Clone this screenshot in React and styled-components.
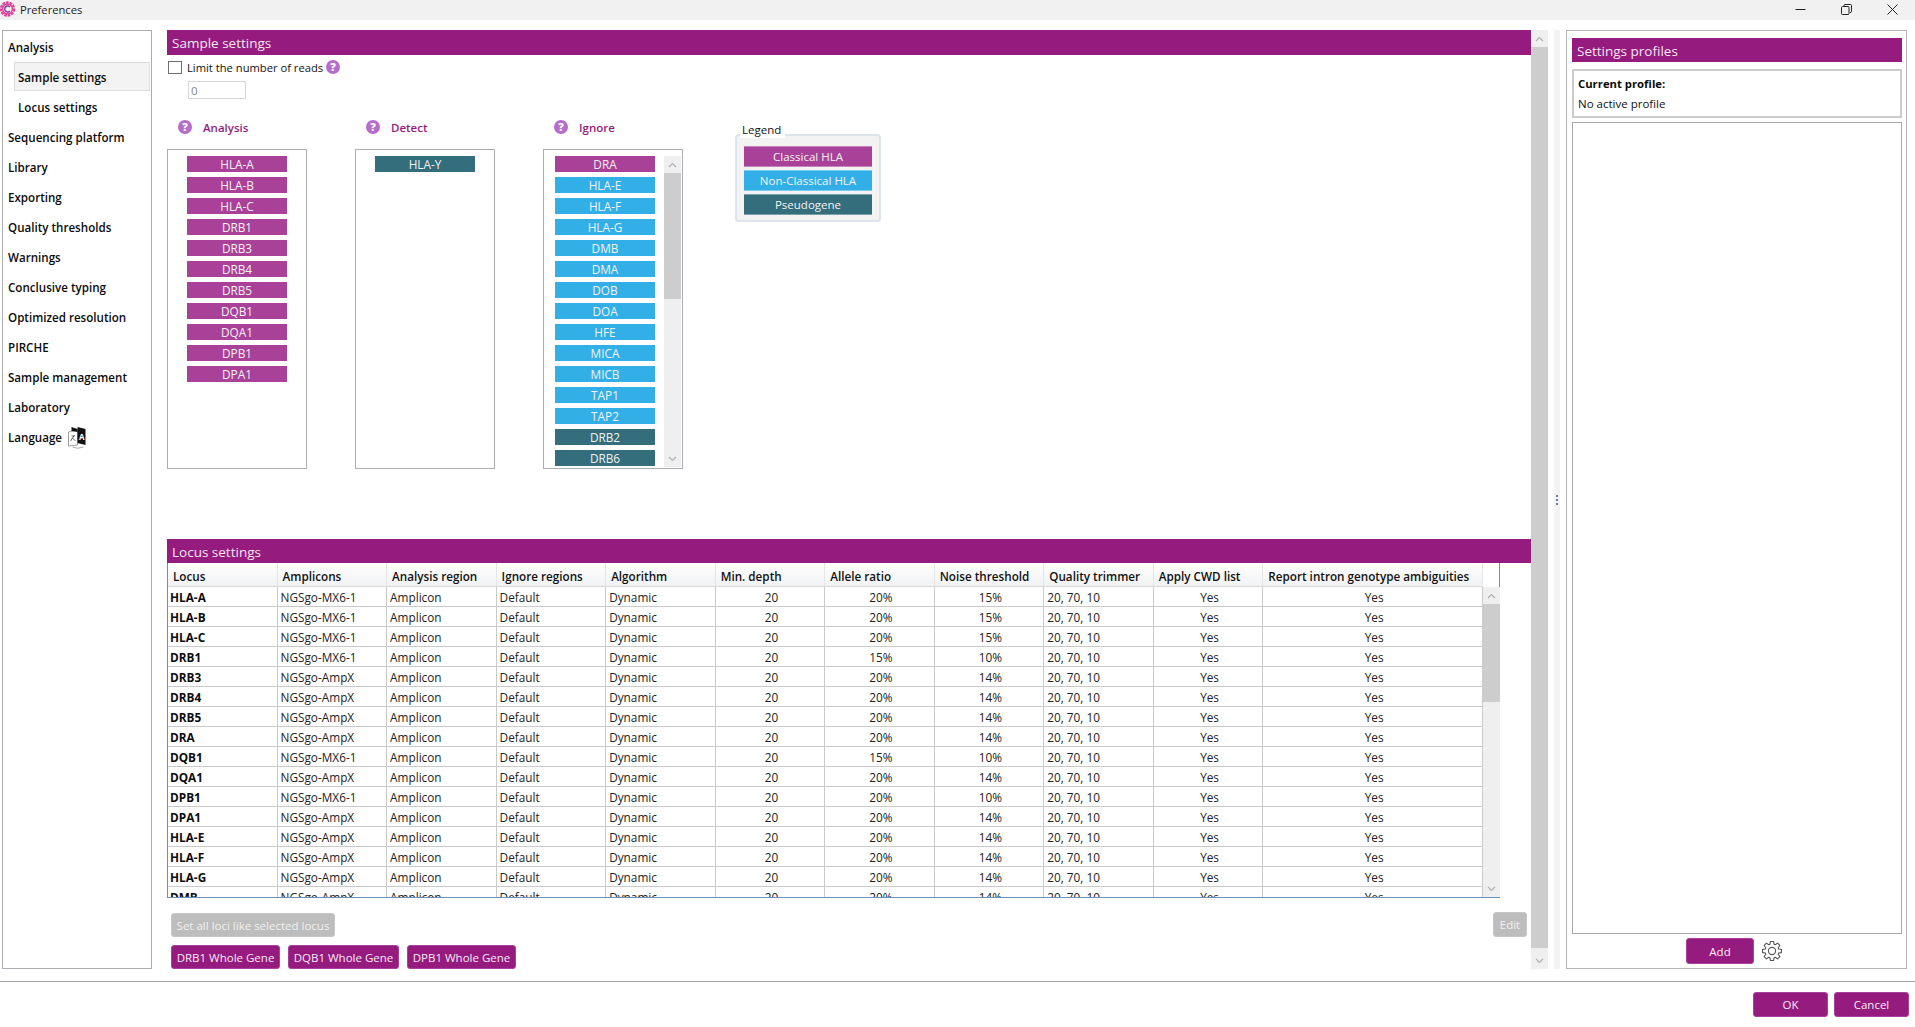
import React from "react";
import styled, { createGlobalStyle } from "styled-components";

const PURPLE = "#951b7e";
const UI_FONT = `"Open Sans", "Noto Sans", "Liberation Sans", sans-serif`;

const GlobalStyle = createGlobalStyle`
  html, body {
    margin: 0;
    padding: 0;
    background: #fff;
  }
  body {
    font-family: ${UI_FONT};
    font-size: 11.5px;
    color: #111;
    overflow: hidden;
  }
`;

const Window = styled.div`
  width: 1915px;
  height: 1027px;
  display: flex;
  flex-direction: column;
  background: #fff;
  overflow: hidden;
`;

const TitleBar = styled.div`
  height: 20px;
  flex: none;
  box-sizing: border-box;
  padding-bottom: 2px;
  display: flex;
  align-items: center;
  background: #f1f1f1;
`;

const AppIcon = styled.svg`
  width: 16px;
  height: 16px;
  flex: none;
`;

const WindowTitle = styled.span`
  margin-left: 4px;
  flex: 1;
  font-size: 11.2px;
  color: #222;
`;

const WinButton = styled.div`
  width: 46px;
  height: 18px;
  display: flex;
  align-items: center;
  justify-content: center;
  color: #222;
`;

const Body = styled.div`
  flex: 1;
  min-height: 0;
  display: flex;
  padding: 10px 8px 12px 2px;
  border-bottom: 1px solid #a3a3a3;
`;

const Nav = styled.nav`
  width: 150px;
  flex: none;
  box-sizing: border-box;
  margin-right: 15px;
  padding: 1px 1px;
  border: 1px solid #abadb3;
  display: flex;
  flex-direction: column;
`;

const NavItem = styled.div`
  height: ${(p) => (p.$sub ? "29px" : "30px")};
  margin-left: ${(p) => (p.$sub ? "10px" : "0")};
  padding: ${(p) => (p.$sub ? "1px" : "0")} 0 0 3px;
  margin-bottom: ${(p) => (p.$sub ? "1px" : "0")};
  box-sizing: border-box;
  display: flex;
  align-items: center;
  gap: 5px;
  font-weight: 600;
  font-size: 11.6px;
  color: #0c0c0c;
  background: ${(p) => (p.$active ? "#f3f3f3" : "transparent")};
  border: 1px solid ${(p) => (p.$active ? "#dcdcdc" : "transparent")};
`;

const Main = styled.main`
  width: 1364px;
  flex: none;
  display: flex;
  flex-direction: column;
`;

const SectionHeader = styled.div`
  height: ${(p) => p.$height || 25}px;
  flex: none;
  box-sizing: border-box;
  padding: ${(p) => p.$nudge || 0}px 0 0 5px;
  display: flex;
  align-items: center;
  background: ${PURPLE};
  color: #f4e6f2;
  font-size: 13.5px;
`;

const SampleArea = styled.section`
  height: 484px;
  flex: none;
  box-sizing: border-box;
  padding-top: 5px;
`;

const CheckRow = styled.div`
  display: flex;
  align-items: center;
  height: 14px;
  padding-left: 1px;
  font-size: 11.2px;
`;

const CheckBox = styled.span`
  width: 14px;
  height: 13px;
  box-sizing: border-box;
  border: 1px solid #6e6e6e;
  background: #fff;
  margin-right: 5px;
`;

const HelpIcon = styled.span`
  width: 14px;
  height: 14px;
  flex: none;
  border-radius: 50%;
  background: #b56ccb;
  color: #fff;
  font-size: 11px;
  font-weight: 800;
  line-height: 14px;
  text-align: center;
  margin-left: ${(p) => p.$gap || 0}px;
`;

const ReadsInput = styled.input`
  display: block;
  width: 58px;
  height: 18px;
  margin: 7px 0 0 21px;
  box-sizing: border-box;
  padding: 0 2px;
  border: 1px solid #d6d6d6;
  font: inherit;
  color: #888;
  outline: none;
`;

const ListsRow = styled.div`
  display: flex;
  margin-top: 18px;
`;

const ListColumn = styled.div`
  width: 140px;
  flex: none;
  margin-right: 48px;
  display: flex;
  flex-direction: column;
`;

const ListHeading = styled.div`
  height: 20px;
  display: flex;
  align-items: center;
  padding-left: 11px;
  margin-bottom: 12px;
  color: ${PURPLE};
  font-weight: 600;
  gap: 11px;
`;

const ListBox = styled.div`
  height: 320px;
  box-sizing: border-box;
  border: 1px solid #abadb3;
  padding: 6px ${(p) => (p.$scroll ? "1px" : "19px")} 1px ${(p) => (p.$scroll ? "11px" : "19px")};
  display: flex;
  gap: 9px;
  overflow: hidden;
`;

const Chips = styled.div`
  display: flex;
  flex-direction: column;
  width: 100px;
  flex: none;
  gap: 5px;
  overflow: hidden;
`;

const colors = {
  classical: "#a94198",
  nonClassical: "#32afe6",
  pseudo: "#346e7c",
};

const Chip = styled.div`
  height: 16px;
  flex: none;
  line-height: 16px;
  text-align: center;
  color: #f2f2f2;
  font-size: 11.8px;
  background: ${(p) => colors[p.$kind]};
`;

const ScrollTrack = styled.div`
  width: 17px;
  flex: none;
  display: flex;
  flex-direction: column;
  background: #efefef;
`;

const ScrollArrow = styled.div`
  height: 17px;
  flex: none;
  display: flex;
  align-items: center;
  justify-content: center;
  color: #b0b0b0;
`;

const ScrollThumb = styled.div`
  height: ${(p) => p.$height}px;
  flex: none;
  background: #cdcdcd;
`;

const ScrollGap = styled.div`
  flex: 1;
`;

const LegendBox = styled.div`
  position: relative;
  width: 146px;
  height: 88px;
  flex: none;
  box-sizing: border-box;
  margin: 17px 0 0 4px;
  padding: 10px 7px;
  border: 2px solid #dde4ec;
  border-radius: 4px;
  background: #f3f3f3;
  display: flex;
  flex-direction: column;
  gap: 3px;
`;

const LegendTitle = styled.span`
  position: absolute;
  top: -14px;
  left: 3px;
  padding: 0 4px 0 2px;
  background: #fff;
  color: #111;
  line-height: 16px;
`;

const LegendChip = styled.div`
  height: 21px;
  flex: none;
  box-sizing: border-box;
  line-height: 19px;
  text-align: center;
  color: #f2f2f2;
  background: ${(p) => colors[p.$kind]};
  border-top: 1px solid rgba(255, 255, 255, 0.35);
  border-bottom: 1px solid rgba(255, 255, 255, 0.35);
`;

const TableFrame = styled.div`
  height: 335px;
  width: 1333px;
  flex: none;
  box-sizing: border-box;
  display: flex;
  border: 1px solid #6d8fb5;
  border-top: none;
`;

const TableClip = styled.div`
  width: 1315px;
  flex: none;
  overflow: hidden;
`;

const Table = styled.table`
  width: 1315px;
  table-layout: fixed;
  border-collapse: separate;
  border-spacing: 0;
  font-size: 11.8px;
`;

const HeadCell = styled.th`
  height: 24px;
  box-sizing: border-box;
  padding: 3px 0 0 5px;
  text-align: left;
  font-size: 11.7px;
  font-weight: 600;
  color: #111;
  white-space: nowrap;
  background: linear-gradient(#fff, #f1f2f4);
  border-right: 1px solid #e6e6e6;
  border-bottom: 1px solid #d8d8d8;
`;

const Cell = styled.td`
  height: 20px;
  box-sizing: border-box;
  padding: 0 0 0 ${(p) => (p.$strong ? 2 : 3)}px;
  text-align: ${(p) => (p.$center ? "center" : "left")};
  font-weight: ${(p) => (p.$strong ? 700 : 400)};
  color: ${(p) => (p.$strong ? "#0c0c0c" : "#222")};
  white-space: nowrap;
  border-right: 1px solid #cacaca;
  border-bottom: 1px solid #cacaca;
`;

const Actions = styled.div`
  display: flex;
  justify-content: space-between;
  align-items: flex-start;
  margin-top: 15px;
  padding: 0 4px;
`;

const ActionColumn = styled.div`
  display: flex;
  flex-direction: column;
  align-items: flex-start;
  gap: 8px;
`;

const ButtonRow = styled.div`
  display: flex;
  gap: 8px;
`;

const Button = styled.button`
  height: ${(p) => p.$height || 24}px;
  width: ${(p) => p.$width}px;
  box-sizing: border-box;
  padding: 0;
  border: 1px solid ${(p) => (p.disabled ? "#c6c6c6" : "#a9409a")};
  border-radius: 3px;
  background: ${(p) => (p.disabled ? "#bdbdbd" : PURPLE)};
  color: ${(p) => (p.disabled ? "#f0f0f0" : "#f7ecf5")};
  font-family: ${UI_FONT};
  font-size: 11.5px;
`;

const EditButton = styled(Button)`
  margin-top: -1px;
`;

const Splitter = styled.div`
  width: 6px;
  flex: none;
  margin: 0 6px;
  background: #f3f3f3;
  display: flex;
  flex-direction: column;
  align-items: center;
  justify-content: center;
  gap: 2px;
`;

const SplitterDot = styled.span`
  width: 2px;
  height: 2px;
  background: #6d7f95;
`;

const Side = styled.aside`
  width: 341px;
  flex: none;
  box-sizing: border-box;
  padding: 7px 4px 4px 5px;
  border: 1px solid #b5b5b5;
  display: flex;
  flex-direction: column;
`;

const ProfileBox = styled.div`
  height: 49px;
  flex: none;
  box-sizing: border-box;
  margin-top: 7px;
  padding: 4px 4px;
  border: 2px solid #cccccc;
  display: flex;
  flex-direction: column;
  gap: 3px;
  line-height: 17px;
`;

const ProfileLabel = styled.span`
  font-size: 11.3px;
  font-weight: 700;
  color: #0c0c0c;
`;

const ProfileList = styled.div`
  flex: 1;
  min-height: 0;
  margin-top: 4px;
  border: 1px solid #aaaaaa;
`;

const SideFooter = styled.div`
  flex: none;
  display: flex;
  align-items: center;
  justify-content: center;
  gap: 8px;
  padding-top: 4px;
  padding-right: 6px;
`;

const Footer = styled.footer`
  height: 45px;
  flex: none;
  box-sizing: border-box;
  display: flex;
  justify-content: flex-end;
  gap: 6px;
  padding: 10px 6px 0 0;
`;

const navItems = [
  { label: "Analysis" },
  { label: "Sample settings", sub: true, active: true },
  { label: "Locus settings", sub: true },
  { label: "Sequencing platform" },
  { label: "Library" },
  { label: "Exporting" },
  { label: "Quality thresholds" },
  { label: "Warnings" },
  { label: "Conclusive typing" },
  { label: "Optimized resolution" },
  { label: "PIRCHE" },
  { label: "Sample management" },
  { label: "Laboratory" },
  { label: "Language", language: true },
];

const analysisLoci = ["HLA-A", "HLA-B", "HLA-C", "DRB1", "DRB3", "DRB4", "DRB5", "DQB1", "DQA1", "DPB1", "DPA1"];
const ignoreLoci = [
  ["DRA", "classical"],
  ["HLA-E", "nonClassical"],
  ["HLA-F", "nonClassical"],
  ["HLA-G", "nonClassical"],
  ["DMB", "nonClassical"],
  ["DMA", "nonClassical"],
  ["DOB", "nonClassical"],
  ["DOA", "nonClassical"],
  ["HFE", "nonClassical"],
  ["MICA", "nonClassical"],
  ["MICB", "nonClassical"],
  ["TAP1", "nonClassical"],
  ["TAP2", "nonClassical"],
  ["DRB2", "pseudo"],
  ["DRB6", "pseudo"],
];

const columns = [
  "Locus",
  "Amplicons",
  "Analysis region",
  "Ignore regions",
  "Algorithm",
  "Min. depth",
  "Allele ratio",
  "Noise threshold",
  "Quality trimmer",
  "Apply CWD list",
  "Report intron genotype ambiguities",
];

const MX = "NGSgo-MX6-1";
const AMP = "NGSgo-AmpX";
const rows = [
  ["HLA-A", MX, "20%", "15%"],
  ["HLA-B", MX, "20%", "15%"],
  ["HLA-C", MX, "20%", "15%"],
  ["DRB1", MX, "15%", "10%"],
  ["DRB3", AMP, "20%", "14%"],
  ["DRB4", AMP, "20%", "14%"],
  ["DRB5", AMP, "20%", "14%"],
  ["DRA", AMP, "20%", "14%"],
  ["DQB1", MX, "15%", "10%"],
  ["DQA1", AMP, "20%", "14%"],
  ["DPB1", MX, "20%", "10%"],
  ["DPA1", AMP, "20%", "14%"],
  ["HLA-E", AMP, "20%", "14%"],
  ["HLA-F", AMP, "20%", "14%"],
  ["HLA-G", AMP, "20%", "14%"],
  ["DMB", AMP, "20%", "14%"],
];

const Chevron = ({ down }) => (
  <svg width="9" height="6" viewBox="0 0 9 6" fill="none" stroke="currentColor" strokeWidth="1.2">
    <polyline points={down ? "1,1 4.5,4.5 8,1" : "1,5 4.5,1.5 8,5"} />
  </svg>
);

const Scrollbar = ({ thumb, className }) => (
  <ScrollTrack className={className}>
    <ScrollArrow>
      <Chevron />
    </ScrollArrow>
    <ScrollThumb $height={thumb} />
    <ScrollGap />
    <ScrollArrow>
      <Chevron down />
    </ScrollArrow>
  </ScrollTrack>
);

const TableScroll = styled(Scrollbar)`
  margin-top: 24px;
`;

// 8 teeth, each tooth is 4 points on an outer and an inner radius
const gearPath = (() => {
  const pts = [];
  for (let i = 0; i < 8; i++) {
    const a = (i * Math.PI) / 4;
    [[-0.3, 7], [-0.17, 9.6], [0.17, 9.6], [0.3, 7]].forEach(([da, r]) => {
      pts.push(`${(10 + r * Math.cos(a + da)).toFixed(2)},${(10 + r * Math.sin(a + da)).toFixed(2)}`);
    });
  }
  return `M${pts.join(" L")} Z`;
})();

const GearIcon = () => (
  <svg width="20" height="20" viewBox="0 0 20 20" fill="none" stroke="#555" strokeWidth="1.1" strokeLinejoin="round">
    <path d={gearPath} />
    <circle cx="10" cy="10" r="3.6" />
  </svg>
);

const LogoIcon = () => (
  <AppIcon viewBox="0 0 16 16">
    <circle cx="7.5" cy="8" r="6.4" fill="none" stroke="#e0409a" strokeWidth="2.6" strokeDasharray="2.6 0.9" />
    <circle cx="7.5" cy="8" r="4.8" fill="none" stroke="#e0409a" strokeWidth="1.4" />
    <path d="M10 6 A3 3 0 1 0 10 10" fill="none" stroke="#8e3c9e" strokeWidth="1.5" />
  </AppIcon>
);

const LanguageIcon = () => (
  <svg width="21" height="23" viewBox="0 0 20 23">
    <path d="M1 6 L10 4 V19 L1 20 Z" fill="#fff" stroke="#888" strokeWidth="0.8" />
    <path d="M3 15 L7 9 M4 10 H7 M5 12 L8 15" stroke="#444" strokeWidth="0.8" fill="none" />
    <path d="M10 1 L18 3 V19 L10 17 Z" fill="#111" />
    <path d="M4 1 L10 3 V6 L4 5 Z" fill="#111" />
    <text x="11.4" y="14" fontSize="8" fontWeight="700" fill="#fff" fontFamily="Open Sans, sans-serif">
      A
    </text>
    <path d="M5 21 Q10 23.5 16 21" fill="none" stroke="#888" strokeWidth="0.7" />
  </svg>
);

const App = () => (
  <Window>
    <GlobalStyle />
    <TitleBar>
      <LogoIcon />
      <WindowTitle>Preferences</WindowTitle>
      <WinButton>
        <svg width="11" height="11" viewBox="0 0 11 11" stroke="currentColor" fill="none">
          <line x1="0.5" y1="5.5" x2="10.5" y2="5.5" />
        </svg>
      </WinButton>
      <WinButton>
        <svg width="11" height="11" viewBox="0 0 11 11" stroke="currentColor" fill="none">
          <rect x="0.5" y="2.5" width="7.5" height="8" rx="1" />
          <path d="M3 2.5 V1.5 Q3 0.5 4 0.5 H9.5 Q10.5 0.5 10.5 1.5 V7.5 Q10.5 8.5 9 8.5" />
        </svg>
      </WinButton>
      <WinButton>
        <svg width="11" height="11" viewBox="0 0 11 11" stroke="currentColor" fill="none">
          <path d="M0.5 0.5 L10.5 10.5 M10.5 0.5 L0.5 10.5" />
        </svg>
      </WinButton>
    </TitleBar>

    <Body>
      <Nav>
        {navItems.map((item) => (
          <NavItem key={item.label} $sub={item.sub} $active={item.active}>
            {item.label}
            {item.language && <LanguageIcon />}
          </NavItem>
        ))}
      </Nav>

      <Main>
        <SectionHeader>Sample settings</SectionHeader>
        <SampleArea>
          <CheckRow>
            <CheckBox />
            Limit the number of reads
            <HelpIcon $gap={3}>?</HelpIcon>
          </CheckRow>
          <ReadsInput defaultValue="0" />
          <ListsRow>
            <ListColumn>
              <ListHeading>
                <HelpIcon>?</HelpIcon>
                Analysis
              </ListHeading>
              <ListBox>
                <Chips>
                  {analysisLoci.map((locus) => (
                    <Chip key={locus} $kind="classical">
                      {locus}
                    </Chip>
                  ))}
                </Chips>
              </ListBox>
            </ListColumn>
            <ListColumn>
              <ListHeading>
                <HelpIcon>?</HelpIcon>
                Detect
              </ListHeading>
              <ListBox>
                <Chips>
                  <Chip $kind="pseudo">HLA-Y</Chip>
                </Chips>
              </ListBox>
            </ListColumn>
            <ListColumn>
              <ListHeading>
                <HelpIcon>?</HelpIcon>
                Ignore
              </ListHeading>
              <ListBox $scroll>
                <Chips>
                  {ignoreLoci.map(([locus, kind]) => (
                    <Chip key={locus} $kind={kind}>
                      {locus}
                    </Chip>
                  ))}
                </Chips>
                <Scrollbar thumb={126} />
              </ListBox>
            </ListColumn>
            <LegendBox>
              <LegendTitle>Legend</LegendTitle>
              <LegendChip $kind="classical">Classical HLA</LegendChip>
              <LegendChip $kind="nonClassical">Non-Classical HLA</LegendChip>
              <LegendChip $kind="pseudo">Pseudogene</LegendChip>
            </LegendBox>
          </ListsRow>
        </SampleArea>

        <SectionHeader $height={24} $nudge={1}>
          Locus settings
        </SectionHeader>
        <TableFrame>
          <TableClip>
            <Table>
              <colgroup>
                {columns.map((name, i) => (
                  <col key={name} width={i === columns.length - 1 ? 219.5 : 109.5} />
                ))}
              </colgroup>
              <thead>
                <tr>
                  {columns.map((name) => (
                    <HeadCell key={name}>{name}</HeadCell>
                  ))}
                </tr>
              </thead>
              <tbody>
                {rows.map(([locus, amplicon, ratio, noise]) => (
                  <tr key={locus}>
                    <Cell $strong>{locus}</Cell>
                    <Cell>{amplicon}</Cell>
                    <Cell>Amplicon</Cell>
                    <Cell>Default</Cell>
                    <Cell>Dynamic</Cell>
                    <Cell $center>20</Cell>
                    <Cell $center>{ratio}</Cell>
                    <Cell $center>{noise}</Cell>
                    <Cell>20, 70, 10</Cell>
                    <Cell $center>Yes</Cell>
                    <Cell $center>Yes</Cell>
                  </tr>
                ))}
              </tbody>
            </Table>
          </TableClip>
          <TableScroll thumb={98} />
        </TableFrame>

        <Actions>
          <ActionColumn>
            <Button disabled $width={164}>
              Set all loci like selected locus
            </Button>
            <ButtonRow>
              <Button $width={109}>DRB1 Whole Gene</Button>
              <Button $width={111}>DQB1 Whole Gene</Button>
              <Button $width={109}>DPB1 Whole Gene</Button>
            </ButtonRow>
          </ActionColumn>
          <EditButton disabled $width={34} $height={25}>
            Edit
          </EditButton>
        </Actions>
      </Main>

      <Scrollbar thumb={901} />
      <Splitter>
        <SplitterDot />
        <SplitterDot />
        <SplitterDot />
      </Splitter>

      <Side>
        <SectionHeader $height={24} $nudge={1}>
          Settings profiles
        </SectionHeader>
        <ProfileBox>
          <ProfileLabel>Current profile:</ProfileLabel>
          <span>No active profile</span>
        </ProfileBox>
        <ProfileList />
        <SideFooter>
          <Button $width={68} $height={26}>
            Add
          </Button>
          <GearIcon />
        </SideFooter>
      </Side>
    </Body>

    <Footer>
      <Button $width={75} $height={25}>
        OK
      </Button>
      <Button $width={75} $height={25}>
        Cancel
      </Button>
    </Footer>
  </Window>
);

export default App;
